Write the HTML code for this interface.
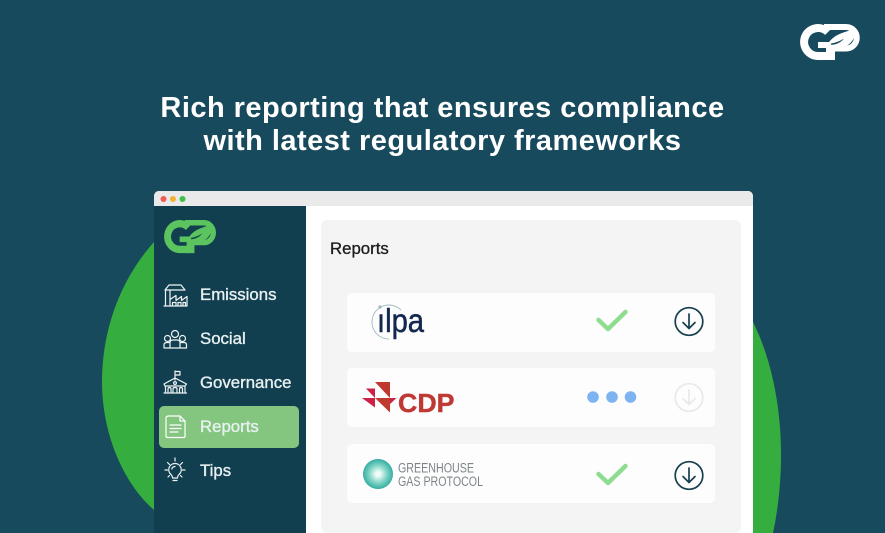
<!DOCTYPE html>
<html><head><meta charset="utf-8">
<style>
html,body{margin:0;padding:0}
body{width:885px;height:533px;overflow:hidden;position:relative;background:#174a5d;font-family:"Liberation Sans",sans-serif}
.t{position:absolute;left:0;width:885px;text-align:center;color:#fff;font-weight:700;font-size:29px;line-height:33px;letter-spacing:.47px;white-space:nowrap}
.abs{position:absolute}
.n{position:absolute;left:200px;color:#e8f0f1;font-size:16.8px;font-weight:400;line-height:20px;-webkit-text-stroke:.35px #e8f0f1}
.row{position:absolute;left:347px;width:368px;height:59px;background:#fdfdfd;border-radius:5px}
</style></head><body>
<svg class="abs" style="left:0;top:0" width="885" height="533">
<defs>
<g id="gp">
<path d="M28 8.100A14 14 0 1 0 18 32H30" fill="none" stroke-width="8"/>
<path d="M24 3H46A10.500 10.500 0 0 1 46 24.500H34" fill="none" stroke-width="6"/>
<path d="M18 18H35V36H26V24H18Z" stroke="none"/>
<path d="M28 20C32 12 42 8 56 5C56 14 50 24 36 25Z" stroke="none"/>
</g>
</defs>
<path d="M154 242C120 280 102 330 102 382C102 432 122 482 154 510Z" fill="#35ae3f"/>
<path d="M753 322C771 358 781 405 781 455C781 482 778 510 773 533H753Z" fill="#35ae3f"/>
<g transform="translate(800 24)" fill="#fff" stroke="#fff"><use href="#gp"/><path d="M31 19.500C36 18.800 40 17 44 14.500C41 18.500 36 20.800 31 20.800Z" fill="#174a5d" stroke="none"/></g>
</svg>

<div class="t" style="top:91.500px">Rich reporting that ensures compliance</div>
<div class="t" style="top:124.500px">with latest regulatory frameworks</div>

<!-- window -->
<div class="abs" style="left:154px;top:191px;width:599px;height:342px;background:#fff;border-radius:5px 5px 0 0;overflow:hidden">
  <div class="abs" style="left:0;top:0;width:599px;height:15px;background:#eaeaea"></div>
  <div class="abs" style="left:0;top:15px;width:152px;height:327px;background:#123f50"></div>
  <div class="abs" style="left:167px;top:29px;width:420px;height:313px;background:#f4f4f4;border-radius:6px"></div>
</div>
<svg class="abs" style="left:0;top:0" width="885" height="533">
<circle cx="163.500" cy="199" r="3" fill="#ee5c52"/><circle cx="173" cy="199" r="3" fill="#f2b230"/><circle cx="182.500" cy="199" r="3" fill="#3fc04a"/>
<g transform="translate(164 220) scale(.87 .92)" fill="#5cc45f" stroke="#5cc45f"><use href="#gp"/><path d="M31 19.500C36 18.800 40 17 44 14.500C41 18.500 36 20.800 31 20.800Z" fill="#123f50" stroke="none"/></g>
</svg>

<div class="abs" style="left:159px;top:406px;width:140px;height:42px;background:#84c67f;border-radius:5px"></div>

<div class="n" style="top:285px">Emissions</div>
<div class="n" style="top:329px">Social</div>
<div class="n" style="top:373px">Governance</div>
<div class="n" style="top:417px">Reports</div>
<div class="n" style="top:461px">Tips</div>

<svg class="abs" style="left:0;top:0" width="885" height="533" fill="none" stroke="#eef4f4" stroke-width="1.200" stroke-linecap="round" stroke-linejoin="round">
<!-- factory -->
<path d="M165 290L169 285H181L185 290ZM165.500 290V306M170 290V306M164 306H187V296.500L181.500 300.500V296.500L176 300.500V295.500L170 299.500M172.500 306V302.500H176V306M178 306V302.500H181V306M183 306V302.500H185.500V306"/>
<!-- social -->
<circle cx="175" cy="334" r="3.500"/><circle cx="167.500" cy="338.500" r="3"/><circle cx="182.500" cy="338.500" r="3"/>
<path d="M164 348V345Q164 342.500 167 342.500H170M170 348V342.500Q170 340 173 340H177Q180 340 180 342.500V348M180 342.500H184Q186.500 342.500 186.500 345V348H164"/>
<!-- governance -->
<path d="M175 380V371M175 371.500H180V375H175M164 384L175 378L186.500 384L185 386H165ZM165.500 392V386M185 392V386M164 393H186.500M168 392V389Q168 387.500 169.500 387.500T171 389V392M173 392V389Q173 387.500 175 387.500T177 389V392M179.500 392V389Q179.500 387.500 181 387.500T182.500 389V392"/>
<circle cx="175" cy="383" r="1.400"/>
<!-- report -->
<path d="M169 416H180L185 421V436Q185 437.500 183.500 437.500H168Q166 437.500 166 436V418Q166 416 169 416ZM180 416V421H185M170 425H181M170 428.500H181M170 432H178" stroke="#fff" stroke-width="1.200"/>
<!-- tips -->
<path d="M175 463.500A6.200 6.200 0 0 0 171 474.500Q172.500 476 172.500 478H177.500Q177.500 476 179 474.500A6.200 6.200 0 0 0 175 463.500ZM173 480.500H177M175 466.500A3.500 3.500 0 0 0 171.800 469M175 458V461M165 470H167.500M182.500 470H185M167.500 462.500L169.500 464.500M182.500 462.500L180.500 464.500M168 477L169.500 475.500M182 477L180.500 475.500"/>
</svg>

<div class="abs" style="left:330px;top:239px;font-size:16.800px;line-height:20px;color:#1b1b1b;font-weight:400;-webkit-text-stroke:.3px #1b1b1b">Reports</div>

<div class="row" style="top:292.500px"></div>
<div class="row" style="top:368px"></div>
<div class="row" style="top:444px"></div>

<svg class="abs" style="left:0;top:0" width="885" height="533">
<!-- ilpa -->
<path d="M401 310A17 17 0 1 0 389 339" fill="none" stroke="#9db8c2" stroke-width=".9"/>
<circle cx="380" cy="307" r="1.600" fill="#9db8c2"/>
<text x="377" y="332" font-family="Liberation Sans,sans-serif" font-size="33" fill="#14274e" stroke="#14274e" stroke-width=".5" textLength="47" lengthAdjust="spacingAndGlyphs">ılpa</text>
<!-- cdp -->
<path d="M375 382H390V398ZM375 398H390V412.500Z" fill="#c0392f"/>
<path d="M366 388.500H375V398ZM362 398H375V407.500ZM390 398H396.500L390 404Z" fill="#cd2145"/>
<text x="398" y="412" font-family="Liberation Sans,sans-serif" font-size="26" font-weight="700" fill="#bf3934" stroke="#bf3934" stroke-width=".4" textLength="56.500" lengthAdjust="spacingAndGlyphs">CDP</text>
<!-- ghg -->
<defs><radialGradient id="gg"><stop offset=".15" stop-color="#f0fbf8"/><stop offset=".55" stop-color="#86d8c9"/><stop offset="1" stop-color="#35ada2"/></radialGradient></defs>
<circle cx="378" cy="474" r="15" fill="url(#gg)"/>
<g font-family="Liberation Sans,sans-serif" font-size="13.500" fill="#7d8488">
<text x="398" y="472.500" textLength="76" lengthAdjust="spacingAndGlyphs">GREENHOUSE</text>
<text x="398" y="486" textLength="85" lengthAdjust="spacingAndGlyphs">GAS PROTOCOL</text>
</g>
<!-- checks -->
<path d="M598.500 320L608 329L625.500 312" fill="none" stroke="#8edd8f" stroke-width="4.400" stroke-linecap="round" stroke-linejoin="round"/>
<path d="M598.500 474L608 483L625.500 466" fill="none" stroke="#8edd8f" stroke-width="4.400" stroke-linecap="round" stroke-linejoin="round"/>
<!-- dots -->
<circle cx="593" cy="397" r="5.800" fill="#7eb3f2"/><circle cx="612" cy="397" r="5.800" fill="#7eb3f2"/><circle cx="630.500" cy="397" r="5.800" fill="#7eb3f2"/>
<!-- downloads -->
<g fill="none" stroke="#17404f" stroke-width="1.700" stroke-linecap="round" stroke-linejoin="round">
<circle cx="689" cy="321.500" r="13.800"/><path d="M689 314V328.500M683 322.500L689 328.500L695 322.500"/>
<circle cx="689" cy="475.500" r="13.800"/><path d="M689 468V482.500M683 476.500L689 482.500L695 476.500"/>
</g>
<g fill="none" stroke="#e9e9e9" stroke-width="1.700" stroke-linecap="round" stroke-linejoin="round">
<circle cx="689" cy="397.500" r="13.800"/><path d="M689 390V404.500M683 398.500L689 404.500L695 398.500"/>
</g>
</svg>
</body></html>
